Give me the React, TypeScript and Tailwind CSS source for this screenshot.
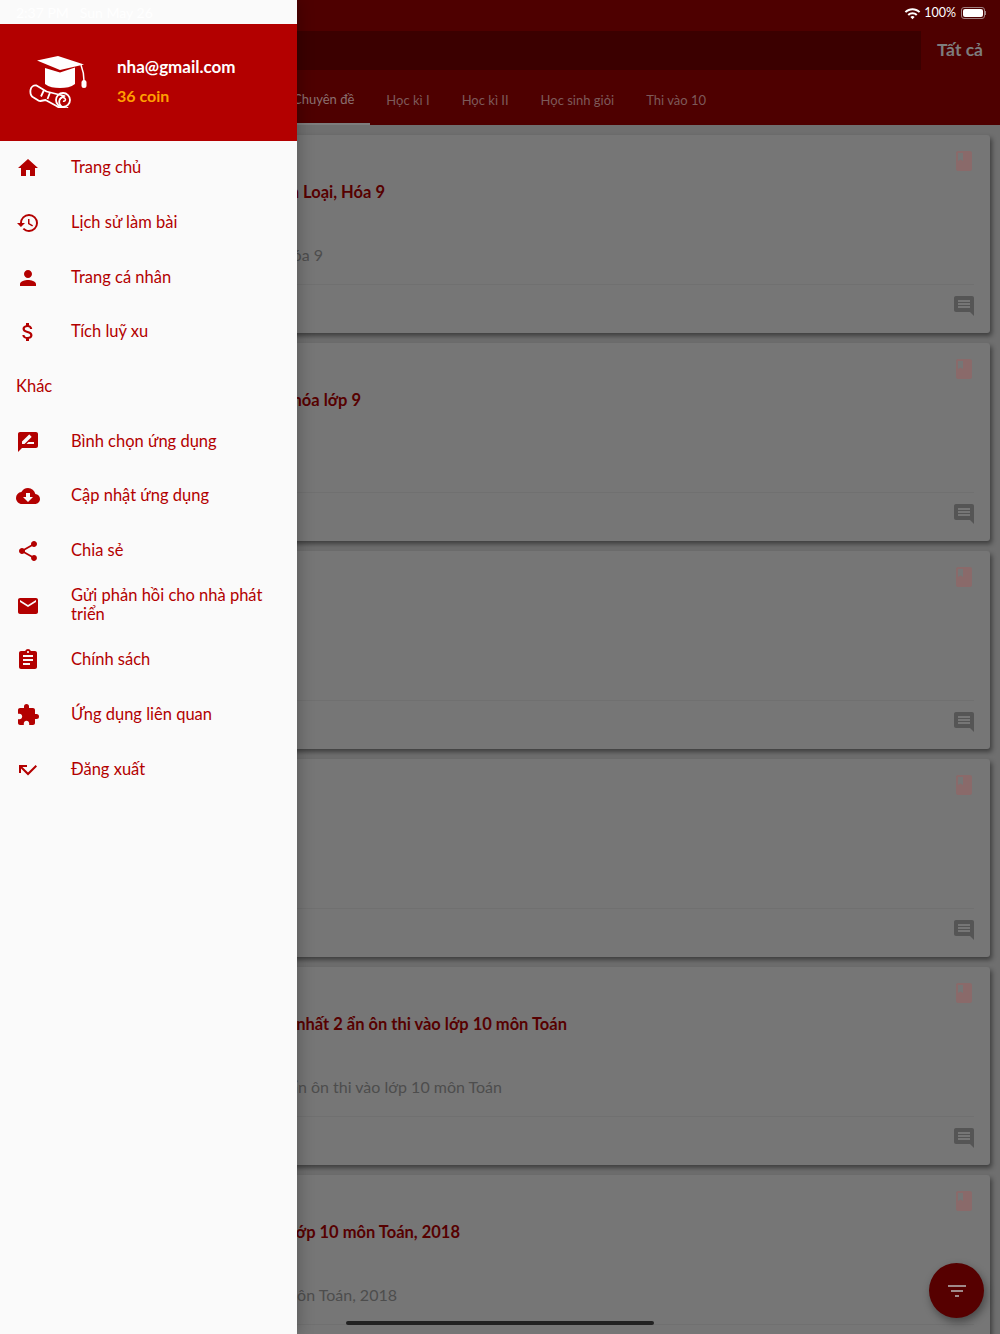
import { ReactNode } from "react";
import {
  MdAssignment,
  MdAttachMoney,
  MdBook,
  MdCallMissed,
  MdCloudDownload,
  MdComment,
  MdEmail,
  MdExtension,
  MdFilterList,
  MdHistory,
  MdHome,
  MdPerson,
  MdRateReview,
  MdShare,
  MdWifi,
} from "react-icons/md";

const MENU_TOP = [
  { icon: <MdHome />, label: "Trang chủ" },
  { icon: <MdHistory />, label: "Lịch sử làm bài" },
  { icon: <MdPerson />, label: "Trang cá nhân" },
  { icon: <MdAttachMoney />, label: "Tích luỹ xu" },
];

const MENU_OTHER = [
  { icon: <MdRateReview />, label: "Bình chọn ứng dụng" },
  { icon: <MdCloudDownload />, label: "Cập nhật ứng dụng" },
  { icon: <MdShare />, label: "Chia sẻ" },
  { icon: <MdEmail />, label: "Gửi phản hồi cho nhà phát triển" },
  { icon: <MdAssignment />, label: "Chính sách" },
  { icon: <MdExtension />, label: "Ứng dụng liên quan" },
  { icon: <MdCallMissed />, label: "Đăng xuất" },
];

// Titles run under the drawer, so each one is aligned on its right end
const CARDS = [
  { title: "Kim Loại, Hóa 9", titleBox: "w-[375px]", sub: "Kim Loại, Hóa 9", subBox: "w-[313px]" },
  { title: "Chuyên đề hóa lớp 9", titleBox: "w-[351px]", sub: "", subBox: "" },
  { title: "", titleBox: "", sub: "", subBox: "" },
  { title: "", titleBox: "", sub: "", subBox: "" },
  {
    title: "Hệ bậc nhất 2 ẩn ôn thi vào lớp 10 môn Toán",
    titleBox: "w-[557px]",
    sub: "Hệ bậc nhất 2 ẩn ôn thi vào lớp 10 môn Toán",
    subBox: "w-[492px]",
  },
  {
    title: "Đề thi vào lớp 10 môn Toán, 2018",
    titleBox: "w-[450px]",
    sub: "Đề thi vào lớp 10 môn Toán, 2018",
    subBox: "w-[387px]",
  },
];

const TABS = ["Chuyên đề", "Học kì I", "Học kì II", "Học sinh giỏi", "Thi vào 10"];

function MenuRow({ icon, children }: { icon: ReactNode; children: ReactNode }) {
  return (
    <div className="flex h-[54.67px] items-center">
      <div className="flex w-[71px] shrink-0 items-center pl-[15.5px] text-[24px] text-[#b30000]">{icon}</div>
      <div className="w-[200px] pb-[1px] text-[16.5px] leading-[19px] text-[#b30000]">{children}</div>
    </div>
  );
}

function CapLogo() {
  return (
    <svg width="60" height="54" viewBox="0 0 60 54" fill="none" className="mb-[3px] shrink-0">
      <path d="M8 6.500 29 2l26 8.500L31 16Z" fill="white" />
      <path d="M16 14l15 4.500L46 13.500V30c-4 3-9 4-15 4s-11-1-15-4Z" fill="white" />
      <path d="M52 11c2 5 3 10 3 16" stroke="white" strokeWidth="1.500" />
      <rect x="52.500" y="26" width="5" height="8" rx="2.500" fill="white" />
      <path
        d="M1.500 36c.5-3 3-5 6-4.500l10 6 18 4.500c-4 1-6 4-5 7.500 1 3 4 5 8 4.500-4 1-8 0-11-2l-11-6-5 1c-2 .5-4-2-7-3.500-2-1-3.500-3.500-3-7.500Z"
        stroke="white"
        strokeWidth="1.800"
        strokeLinejoin="round"
      />
      <circle cx="34" cy="46" r="7" stroke="white" strokeWidth="1.800" />
      <path d="M31 46c0-2.500 3.500-3.500 5-1.500s-.5 3-2 2.500" stroke="white" strokeWidth="1.500" />
      <path d="m15 36-3 6.500M21 38.500l-2.500 6.500" stroke="white" strokeWidth="1.800" />
    </svg>
  );
}

function Card({ card }: { card: (typeof CARDS)[number] }) {
  return (
    <div className="ml-[10px] flex h-[198px] w-[980px] shrink-0 flex-col rounded-[3px] bg-[#767676] shadow-[2px_3px_5px_rgba(0,0,0,0.45)]">
      <div className="flex h-[149px] flex-col">
        <div className="flex justify-end pt-[14px] pr-[14px] text-[24px] text-[#8a6a6a]">
          <MdBook />
        </div>
        <div className={`mt-[7px] h-[24px] text-right text-[16.5px] leading-[24px] font-bold text-[#560000] ${card.titleBox}`}>
          {card.title}
        </div>
        <div className={`mt-[39px] h-[24px] text-right text-[16px] leading-[24px] text-[#4d4d4d] ${card.subBox}`}>
          {card.sub}
        </div>
      </div>
      <div className="mr-[16px] border-t border-[#707070]" />
      <div className="flex justify-end pt-[9px] pr-[14px] text-[24px] text-[#555555]">
        <MdComment />
      </div>
    </div>
  );
}

export default function App() {
  return (
    <div className="relative h-[1334px] w-[1000px] overflow-hidden bg-[#6f6f6f] font-['Lato','Noto_Sans',sans-serif]">
      {/* Page behind the drawer */}
      <div className="flex h-[125px] flex-col bg-[#4e0000]">
        <div className="flex h-[24px] items-center justify-end gap-[5px] pt-[2px] pr-[14px] text-[12.5px] text-white">
          <MdWifi className="-mr-[2px] text-[17px]" />
          <span>100%</span>
          <div className="flex items-center">
            <div className="h-[12px] w-[24px] rounded-[3px] border border-[#a08080] p-px">
              <div className="h-full w-full rounded-[2px] bg-white" />
            </div>
            <div className="h-[4px] w-[1px] bg-[#a08080]" />
          </div>
        </div>
        <div className="mt-[7px] flex h-[39px] items-center">
          <div className="h-full w-[921px] bg-[#3b0000]" />
          <div className="pb-[1px] pl-[16px] text-[17.5px] font-bold text-[#7d7d7d]">Tất cả</div>
        </div>
        <div className="ml-[277px] flex h-[55px] items-stretch text-[13px] text-[#7d5a5a]">
          {TABS.map((tab, i) => (
            <div
              key={tab}
              className={
                i === 0
                  ? "flex items-center border-b-2 border-[#7d7d7d] px-[16px] pt-[6px] text-[#8a7070]"
                  : "flex items-center px-[16px] pt-[6px]"
              }
            >
              {tab}
            </div>
          ))}
        </div>
      </div>

      <div className="flex flex-col gap-[10px] pt-[10px]">
        {CARDS.map((card, i) => (
          <Card key={i} card={card} />
        ))}
      </div>

      <div className="absolute top-[1263px] left-[929px] flex h-[55px] w-[55px] items-center justify-center rounded-full bg-[#560000] text-[24px] text-[#a08a8a] shadow-[2px_4px_8px_rgba(0,0,0,0.4)]">
        <MdFilterList />
      </div>

      <div className="absolute top-[1321px] left-[346px] h-[4px] w-[308px] rounded-full bg-[#222222]" />

      {/* Drawer */}
      <div className="absolute top-0 left-0 flex h-full w-[297px] flex-col bg-[#fafafa] shadow-[0_0_16px_rgba(0,0,0,0.3)]">
        <div className="flex h-[24px] items-center gap-[11px] pl-[16px] text-[14px] text-white">
          <span>2:37 PM</span>
          <span>Sun May 26</span>
        </div>
        <div className="flex h-[117px] items-center bg-[#b30000] pl-[29px]">
          <CapLogo />
          <div className="ml-[28px] flex flex-col gap-[6px] pb-[4px] text-[16px] leading-[23px] font-bold">
            <span className="text-[17px] text-white">nha@gmail.com</span>
            <span className="text-[#ffa000]">36 coin</span>
          </div>
        </div>
        {MENU_TOP.map((item) => (
          <MenuRow key={item.label} icon={item.icon}>
            {item.label}
          </MenuRow>
        ))}
        <div className="flex h-[54.67px] items-center pb-[1px] pl-[16px] text-[16.5px] text-[#b30000]">Khác</div>
        {MENU_OTHER.map((item) => (
          <MenuRow key={item.label} icon={item.icon}>
            {item.label}
          </MenuRow>
        ))}
      </div>
    </div>
  );
}
